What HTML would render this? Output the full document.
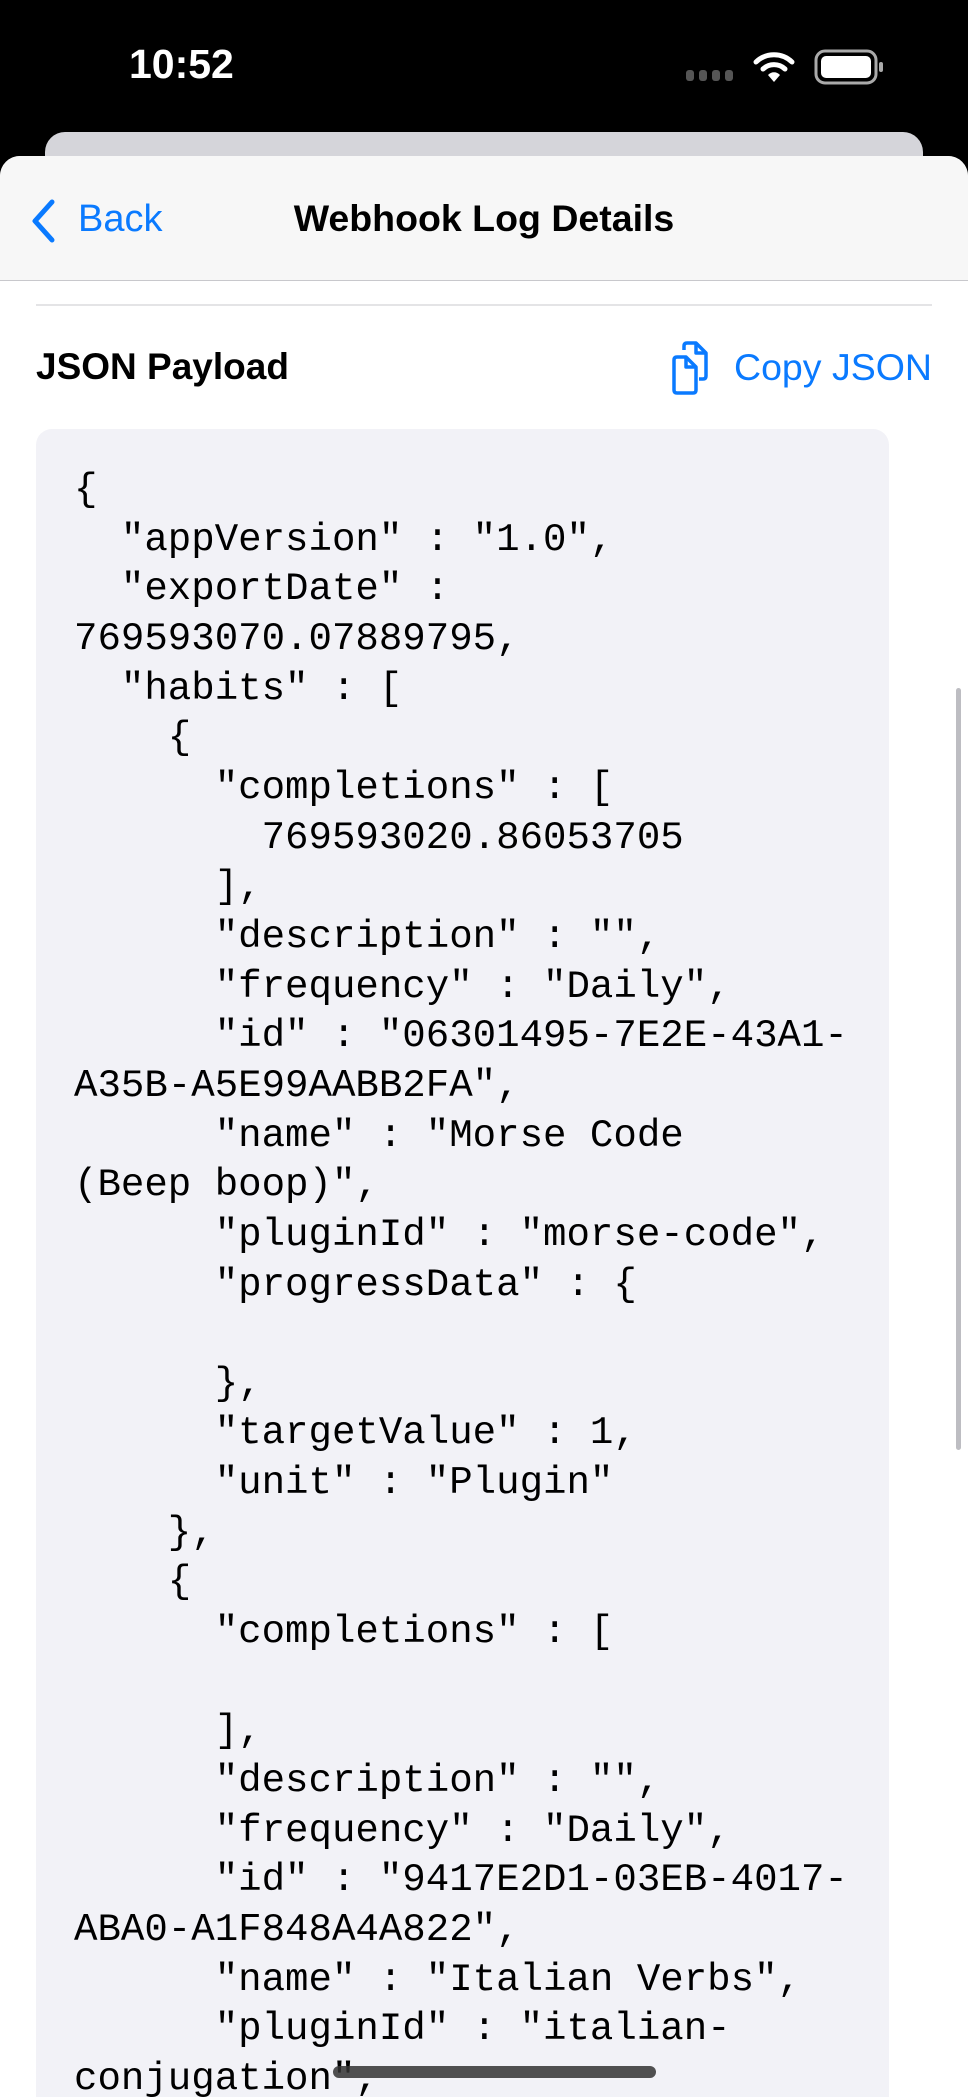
<!DOCTYPE html>
<html><head><meta charset="utf-8"><style>
*{margin:0;padding:0;box-sizing:border-box}
html,body{width:968px;height:2097px;overflow:hidden}
body{background:#000;position:relative;font-family:"Liberation Sans",sans-serif}
.time{position:absolute;left:129px;top:41px;color:#fff;font-size:41px;font-weight:600}
.card2{position:absolute;left:45px;top:132px;width:878px;height:60px;background:#d5d5da;border-radius:20px 20px 0 0}
.sheet{position:absolute;left:0;top:156px;width:968px;height:1941px;background:#fff;border-radius:20px 20px 0 0;overflow:hidden}
.nav{height:125px;background:#f7f7f7;border-bottom:1px solid #c8c8cc;position:relative}
.back{position:absolute;left:78px;top:42px;color:#0a7aff;font-size:38px}
.title{position:absolute;left:0;width:968px;text-align:center;top:41px;font-size:37.5px;font-weight:700;color:#000}
.sep{position:absolute;left:36px;top:148px;width:896px;height:2px;background:#e4e4e6}
.hdr{position:absolute;left:36px;top:190px;font-size:37px;font-weight:700;color:#000}
.copy{position:absolute;left:734px;top:190px;font-size:37.5px;color:#0a7aff}
.box{position:absolute;left:36px;top:273px;width:853px;height:1800px;background:#f2f2f7;border-radius:16px}
pre{position:absolute;left:74px;top:309px;font-family:"Liberation Mono",monospace;font-size:39.1px;line-height:49.65px;color:#000}
.sb{position:absolute;left:956px;top:688px;width:5px;height:762px;background:#bdbdc2;border-radius:3px}
.home{position:absolute;left:333px;top:2066px;width:323px;height:12px;border-radius:6px;background:#333;opacity:.85}
</style></head><body>
<div class="time">10:52</div>
<svg style="position:absolute;left:686px;top:68px" width="50" height="14"><g fill="#555"><rect x="0" y="2" width="8" height="11" rx="3"/><rect x="13" y="2" width="8" height="11" rx="3"/><rect x="26" y="2" width="8" height="11" rx="3"/><rect x="39" y="2" width="8" height="11" rx="3"/></g></svg>
<svg style="position:absolute;left:752px;top:50px" width="44" height="34" viewBox="0 0 44 34"><g fill="none" stroke="#fff" stroke-width="5" stroke-linecap="round"><path d="M4 12 A26 26 0 0 1 40 12"/><path d="M11 19 A16 16 0 0 1 33 19"/></g><path d="M16 25 L22 32 L28 25 A8 8 0 0 0 16 25Z" fill="#fff"/></svg>
<svg style="position:absolute;left:814px;top:49px" width="72" height="36"><rect x="2" y="2" width="60" height="32" rx="9" fill="none" stroke="#aaa" stroke-width="3"/><rect x="7" y="7" width="50" height="22" rx="5" fill="#fff"/><rect x="65" y="13" width="4" height="10" rx="2" fill="#aaa"/></svg>
<div class="card2"></div>
<div class="sheet">
<div class="nav">
<svg style="position:absolute;left:28px;top:42px" width="30" height="46"><path d="M24 4 L7 23 L24 42" fill="none" stroke="#0a7aff" stroke-width="5" stroke-linecap="round" stroke-linejoin="round"/></svg>
<div class="back">Back</div>
<div class="title">Webhook Log Details</div>
</div>
<div class="sep"></div>
<div class="hdr">JSON Payload</div>
<svg style="position:absolute;left:668px;top:184px" width="48" height="56" viewBox="0 0 48 56" fill="none" stroke="#0a7aff" stroke-width="3.5" stroke-linejoin="round"><path d="M16 10 V6 Q16 3 19 3 H28 L38 13 V36 Q38 39 35 39 H31"/><path d="M28 3 V13 H38"/><path d="M6 20 Q6 17 9 17 H18 L28 27 V50 Q28 53 25 53 H9 Q6 53 6 50 Z"/><path d="M18 17 V27 H28"/></svg>
<div class="copy">Copy JSON</div>
<div class="box"></div>
<pre>{
  "appVersion" : "1.0",
  "exportDate" :
769593070.07889795,
  "habits" : [
    {
      "completions" : [
        769593020.86053705
      ],
      "description" : "",
      "frequency" : "Daily",
      "id" : "06301495-7E2E-43A1-
A35B-A5E99AABB2FA",
      "name" : "Morse Code
(Beep boop)",
      "pluginId" : "morse-code",
      "progressData" : {

      },
      "targetValue" : 1,
      "unit" : "Plugin"
    },
    {
      "completions" : [

      ],
      "description" : "",
      "frequency" : "Daily",
      "id" : "9417E2D1-03EB-4017-
ABA0-A1F848A4A822",
      "name" : "Italian Verbs",
      "pluginId" : "italian-
conjugation",</pre>
</div>
<div class="sb"></div>
<div class="home"></div>
</body></html>
